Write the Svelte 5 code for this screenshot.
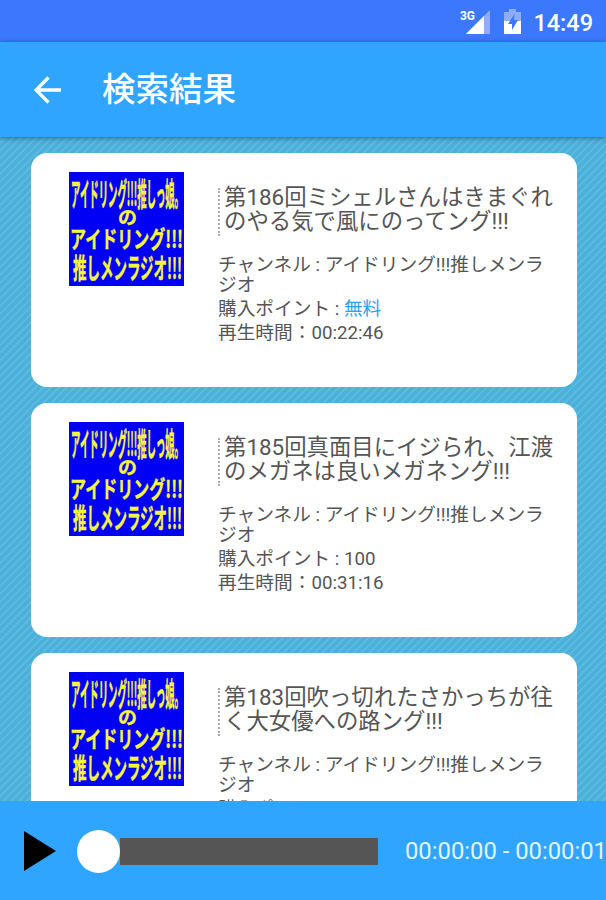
<script lang="ts">
    type Program = {
        title: string[];
        points: string;
        free: boolean;
        duration: string;
    };

    const programs: Program[] = [
        { title: ['第186回ミシェルさんはきまぐれ', 'のやる気で風にのってング!!!'], points: '無料', free: true, duration: '00:22:46' },
        { title: ['第185回真面目にイジられ、江渡', 'のメガネは良いメガネング!!!'], points: '100', free: false, duration: '00:31:16' },
        { title: ['第183回吹っ切れたさかっちが往', 'く大女優への路ング!!!'], points: '100', free: false, duration: '00:30:00' },
    ];

    let playing = $state(false);
</script>

<div class="screen">
    <div class="status">
        <svg class="signal" width="30" height="28" viewBox="0 0 30 28">
            <path d="M30 1V25H6z" fill="#8eadfb" />
            <path d="M24 7V25H6z" fill="#fff" />
            <text x="0" y="10.500" textLength="15" lengthAdjust="spacingAndGlyphs">3G</text>
        </svg>
        <svg class="battery" width="17" height="25" viewBox="0 0 17 25">
            <path d="M0 3H5V0H12V3H17V13H0z" fill="#8eadfb" />
            <path d="M0 12H17V25H0z" fill="#fff" />
            <path d="M10.500 5L4 15H8V21L14 11H10z" fill="#3b78fb" />
        </svg>
        <span class="clock">14:49</span>
    </div>

    <header>
        <button class="back" aria-label="戻る">
            <svg width="28" height="28" viewBox="0 0 28 28">
                <path d="M27 14H3M14.500 1.500L2 14L14.500 26.500" fill="none" stroke="#fff" stroke-width="3.300" />
            </svg>
        </button>
        <h1>検索結果</h1>
    </header>

    <main>
        {#each programs as program}
            <article>
                <svg class="thumb" width="115" height="114" viewBox="0 0 115 114">
                    <rect width="115" height="114" fill="#0000f4" />
                    <text transform="translate(2 34) scale(1 2)" font-size="16" textLength="113" lengthAdjust="spacingAndGlyphs">アイドリング!!!推しっ娘。</text>
                    <text transform="translate(49 52) scale(1 0.950)" font-size="19">の</text>
                    <text transform="translate(1 76) scale(1 1.300)" font-size="18" textLength="113" lengthAdjust="spacingAndGlyphs">アイドリング!!!</text>
                    <text transform="translate(4 107) scale(1 1.650)" font-size="17" textLength="109" lengthAdjust="spacingAndGlyphs">推しメンラジオ!!!</text>
                </svg>
                <div class="info">
                    <h2><span>{program.title[0]}<br />{program.title[1]}</span></h2>
                    <p class="channel">チャンネル : アイドリング!!!推しメンラ<br />ジオ</p>
                    <p>購入ポイント : <span class:free={program.free}>{program.points}</span></p>
                    <p>再生時間：{program.duration}</p>
                </div>
            </article>
        {/each}
    </main>

    <footer>
        <button class="play" aria-label="再生" onclick={() => (playing = !playing)}>
            <svg width="32" height="40" viewBox="0 0 32 40"><path d="M0 0L32 20L0 40z" /></svg>
        </button>
        <div class="seek">
            <span class="knob"></span>
            <span class="track"></span>
        </div>
        <span class="time">00:00:00 - 00:00:01</span>
    </footer>
</div>

<style>
    :global(body) {
        margin: 0;
    }

    .screen {
        width: 606px;
        height: 900px;
        display: flex;
        flex-direction: column;
        overflow: hidden;
        font-family: Roboto, "Noto Sans CJK JP", sans-serif;
        background: #4fb4dc;
    }

    button {
        padding: 0;
        border: 0;
        background: none;
    }

    svg {
        display: block;
    }

    .status {
        flex: none;
        height: 42px;
        box-sizing: border-box;
        display: flex;
        align-items: flex-start;
        padding: 9px 13px 0 0;
        justify-content: flex-end;
        background: #3b78fd;
        color: #fff;
    }

    .signal {
        overflow: visible;
    }

    .signal text {
        font-size: 13px;
        font-weight: 700;
        fill: #fff;
    }

    .battery {
        margin: 0 12px 0 14px;
    }

    .clock {
        font-size: 23.5px;
        line-height: 28px;
        font-weight: 500;
    }

    header {
        flex: none;
        height: 95px;
        display: flex;
        align-items: center;
        padding-left: 34px;
        gap: 40px;
        background: #2fa5ff;
        box-shadow: 0 1px 5px rgba(0, 40, 60, 0.5);
        position: relative;
    }

    h1 {
        margin: 0;
        font-size: 33.5px;
        line-height: 40px;
        font-weight: 500;
        color: #fff;
    }

    main {
        flex: 1;
        min-height: 0;
        overflow: hidden;
        display: flex;
        flex-direction: column;
        gap: 16px;
        padding: 16px 29px 0 31px;
        background: repeating-linear-gradient(135deg, #4bb1da 0, #4bb1da 3px, #62bcdf 4px, #62bcdf 4.5px, #4bb1da 5.5px);
    }

    article {
        flex: none;
        height: 234px;
        box-sizing: border-box;
        display: flex;
        align-items: flex-start;
        gap: 34px;
        padding: 19px 0 0 38px;
        background: #fff;
        border-radius: 16px;
    }

    .thumb {
        flex: none;
    }

    .thumb text {
        fill: #f7f53c;
        stroke: #f7f53c;
        stroke-width: 0.3;
        font-family: "Noto Sans CJK JP", sans-serif;
        font-weight: 700;
    }

    .info {
        padding-top: 16px;
        color: #555;
        white-space: nowrap;
    }

    h2 {
        margin: 0 0 19px;
        padding-left: 4px;
        border-left: 2px dotted #aaa;
        font-size: 22.4px;
        line-height: 24px;
        font-weight: 400;
    }

    /* lift the title a little against its dotted rule */
    h2 span {
        position: relative;
        top: -3px;
    }

    p {
        margin: 0;
        font-size: 18.7px;
        line-height: 23.5px;
    }

    .channel {
        line-height: 20px;
        margin-bottom: 3px;
    }

    .free {
        color: #2fa0f0;
    }

    footer {
        flex: none;
        height: 99px;
        display: flex;
        align-items: center;
        padding: 1px 0 0 24px;
        box-sizing: border-box;
        background: #2fa5ff;
        position: relative;
    }

    .seek {
        flex: none;
        display: flex;
        align-items: center;
        margin: 0 27px 0 21px;
    }

    .knob {
        width: 43px;
        height: 43px;
        border-radius: 50%;
        background: #fff;
    }

    .track {
        width: 258px;
        height: 27px;
        background: #555;
    }

    .time {
        font-size: 23.8px;
        color: #e4f4ff;
        white-space: nowrap;
    }
</style>
